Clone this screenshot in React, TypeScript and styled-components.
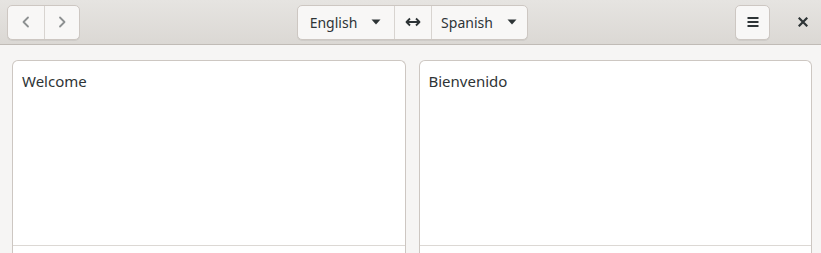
import React from "react";
import styled, { createGlobalStyle } from "styled-components";

const Global = createGlobalStyle`
  html, body { margin: 0; padding: 0; background: #f6f5f4; }
  body { font-family: "Noto Sans", "DejaVu Sans", sans-serif; font-size: 14px; color: #2e3436; }
  #root { width: 821px; height: 253px; overflow: hidden; }
`;

const Window = styled.div`
  width: 821px;
  height: 253px;
  display: flex;
  flex-direction: column;
  background: #f6f5f4;
`;

const HeaderBar = styled.header`
  height: 44px;
  flex: none;
  display: grid;
  grid-template-columns: 1fr auto 1fr;
  align-items: center;
  padding: 0 0 0 3px;
  background: linear-gradient(to bottom, #e6e4e1, #dbd8d4);
  border-bottom: 1px solid #c0bbb6;
  box-sizing: content-box;
`;

const Side = styled.div<{ $end?: boolean }>`
  display: flex;
  align-items: center;
  justify-content: ${(p) => (p.$end ? "flex-end" : "flex-start")};
  padding-left: ${(p) => (p.$end ? "0" : "4px")};
  gap: 14px;
`;

const Linked = styled.div`
  display: flex;
  height: 33px;
  border: 1px solid #cdc7c2;
  border-radius: 5px;
  background: #f8f7f6;
  box-shadow: 0 1px 0 rgba(0, 0, 0, 0.06);
  overflow: hidden;
`;

const Seg = styled.button<{ $w: number }>`
  width: ${(p) => p.$w}px;
  height: 100%;
  border: none;
  background: transparent;
  padding: 0;
  display: flex;
  align-items: center;
  justify-content: center;
  gap: 14px;
  font: inherit;
  color: #2e3436;
  & + & { border-left: 1px solid #d8d4d0; }
`;

const SoloButton = styled.button`
  width: 35px;
  height: 35px;
  border: 1px solid #cdc7c2;
  border-radius: 5px;
  background: #f8f7f6;
  box-shadow: 0 1px 0 rgba(0, 0, 0, 0.06);
  display: flex;
  align-items: center;
  justify-content: center;
  padding: 0;
`;

const CloseButton = styled.button`
  width: 37px;
  height: 35px;
  border: none;
  background: transparent;
  display: flex;
  align-items: center;
  justify-content: center;
  padding: 0;
`;

const Body = styled.main`
  flex: 1;
  display: grid;
  grid-template-columns: 1fr 1fr;
  gap: 13px;
  padding: 15px 9px 0 12px;
`;

const Pane = styled.section`
  border: 1px solid #cdc7c2;
  border-bottom: none;
  border-radius: 6px 6px 0 0;
  background: #ffffff;
  display: flex;
  flex-direction: column;
`;

const PaneText = styled.div`
  height: 185px;
  padding: 10px 9px;
  box-sizing: border-box;
  border-bottom: 1px solid #dcd8d4;
  font-size: 15px;
  line-height: 20px;
`;

const PaneFoot = styled.div`
  flex: 1;
  background: #fff;
`;

const Chevron = ({ dir }: { dir: "l" | "r" }) => (
  <svg width="16" height="16" viewBox="0 0 16 16">
    <path
      d={dir === "l" ? "M10 3.5 L5.5 8 L10 12.5" : "M6 3.5 L10.5 8 L6 12.5"}
      fill="none"
      stroke="#8d9091"
      strokeWidth="1.8"
      strokeLinecap="round"
      strokeLinejoin="round"
    />
  </svg>
);

const Caret = () => (
  <svg width="10" height="6" viewBox="0 0 10 6">
    <path d="M0.5 0.5 L9.5 0.5 L5 5.5 Z" fill="#2e3436" />
  </svg>
);

const Swap = () => (
  <svg width="16" height="10" viewBox="0 0 16 10">
    <path d="M2 5 H14" stroke="#2e3436" strokeWidth="1.8" />
    <path d="M5 1.5 L1.5 5 L5 8.5 M11 1.5 L14.5 5 L11 8.5" fill="none" stroke="#2e3436" strokeWidth="1.8" strokeLinejoin="round" />
  </svg>
);

const Menu = () => (
  <svg width="12" height="12" viewBox="0 0 12 12">
    <rect x="0.5" y="1" width="11" height="2" fill="#2e3436" />
    <rect x="0.5" y="5" width="11" height="2" fill="#2e3436" />
    <rect x="0.5" y="9" width="11" height="2" fill="#2e3436" />
  </svg>
);

const Close = () => (
  <svg width="10" height="10" viewBox="0 0 10 10">
    <path d="M1.5 1.5 L8.5 8.5 M8.5 1.5 L1.5 8.5" stroke="#2e3436" strokeWidth="2.2" strokeLinecap="square" />
  </svg>
);

export default function App() {
  return (
    <Window>
      <Global />
      <HeaderBar>
        <Side>
          <Linked>
            <Seg $w={36}><Chevron dir="l" /></Seg>
            <Seg $w={35}><Chevron dir="r" /></Seg>
          </Linked>
        </Side>
        <Linked>
          <Seg $w={96}>English <Caret /></Seg>
          <Seg $w={37}><Swap /></Seg>
          <Seg $w={96}>Spanish <Caret /></Seg>
        </Linked>
        <Side $end>
          <SoloButton><Menu /></SoloButton>
          <CloseButton><Close /></CloseButton>
        </Side>
      </HeaderBar>
      <Body>
        <Pane>
          <PaneText>Welcome</PaneText>
          <PaneFoot />
        </Pane>
        <Pane>
          <PaneText>Bienvenido</PaneText>
          <PaneFoot />
        </Pane>
      </Body>
    </Window>
  );
}
